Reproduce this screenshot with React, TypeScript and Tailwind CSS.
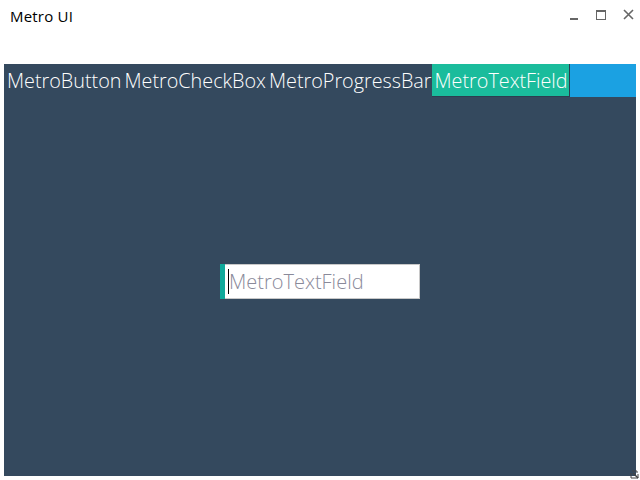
import React from 'react';

const tabs = ['MetroButton', 'MetroCheckBox', 'MetroProgressBar', 'MetroTextField'];

const App = () => {
  return (
    <div className="w-[640px] h-[480px] bg-white relative overflow-hidden font-['Open_Sans',sans-serif]">
      {/* title bar */}
      <div className="h-[64px] flex items-start justify-between">
        <div className="pl-[10px] pt-[5px] text-[15px] text-black tracking-[0.2px]">Metro UI</div>
        <div className="flex items-center pr-[6px] pt-[9px]">
          <div className="w-[8px] h-[11px] flex items-end mr-[18px]">
            <div className="w-[8px] h-[2px] bg-[#666]" />
          </div>
          <div className="w-[10px] h-[10px] border border-[#666] border-t-2 mr-[17px]" />
          <svg width="11" height="11" viewBox="0 0 11 11">
            <path d="M1 1L10 10M10 1L1 10" stroke="#666" strokeWidth="1.6" />
          </svg>
        </div>
      </div>

      {/* content */}
      <div className="mx-[4px] h-[412px] bg-[#34495e] flex flex-col">
        <div className="h-[33px] flex bg-[#34495e]">
          {tabs.map((t, i) => {
            const active = i === tabs.length - 1;
            return (
              <div
                key={t}
                className={
                  active
                    ? 'pl-[3px] pr-[1px] h-[33px] bg-[#1abc9c] border-r border-b border-[#2c3e50] text-white text-[19.8px] font-light leading-[33px]'
                    : 'pl-[3px] h-[33px] text-white text-[19.8px] font-light leading-[33px]'
                }
              >
                {t}
              </div>
            );
          })}
          <div className="flex-1 bg-[#1ba1e2]" />
        </div>

        <div className="flex-1 flex items-center justify-center">
          <div className="w-[200px] h-[35px] flex bg-white border border-[#c8c8c8] mt-[-10px]">
            <div className="w-[5px] bg-[#0fa99b] -ml-px -my-px h-[35px]" />
            <div className="flex-1 flex items-center pl-[3px]">
              <div className="w-px h-[25px] bg-black" />
              <span className="text-[20px] font-light text-[#8a8a9a] leading-none">MetroTextField</span>
            </div>
          </div>
        </div>
      </div>

      {/* resize grip */}
      <svg className="absolute right-0 bottom-0" width="10" height="10" viewBox="0 0 10 10">
        <path d="M2 1H7V3M1 3V8H8V4" stroke="#444" strokeWidth="1" fill="none" />
        <path d="M3 3L8 8" stroke="#444" strokeWidth="1.4" />
      </svg>
    </div>
  );
};

export default App;
